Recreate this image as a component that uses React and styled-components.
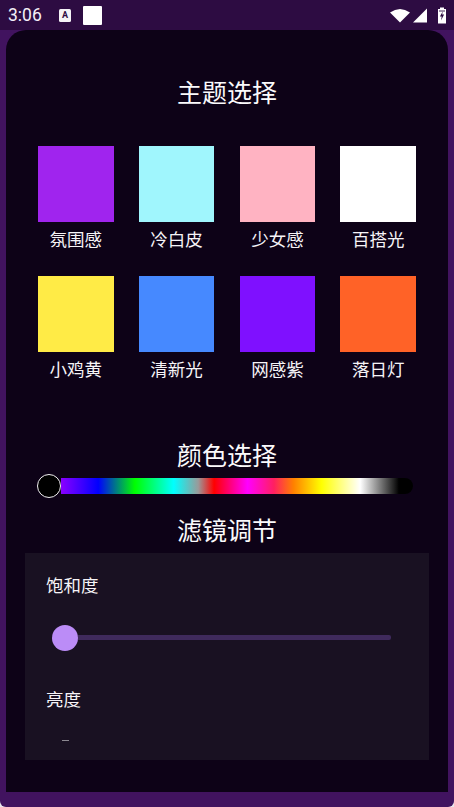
import React from "react";
import styled, { createGlobalStyle } from "styled-components";

const Global = createGlobalStyle`
  html, body { margin: 0; padding: 0; background: #e9e6ec; }
  #root { width: 454px; height: 807px; }
  * { box-sizing: border-box; }
`;

const CJK = `"Noto Sans CJK SC", "Noto Sans", sans-serif`;

const Screen = styled.div`
  width: 454px;
  height: 807px;
  display: flex;
  flex-direction: column;
  background: #41135f;
  border-radius: 0 0 6px 6px;
  overflow: hidden;
  font-family: ${CJK};
  color: #fff;
`;

const StatusBar = styled.div`
  height: 30px;
  flex: none;
  display: flex;
  align-items: center;
  padding: 0 8px 0 8px;
  background: #2d0c42;
`;

const Time = styled.span`
  font-family: Roboto, sans-serif;
  font-size: 17.5px;
  color: #f4eff7;
  width: 51px;
`;

const NoticeA = styled.span`
  width: 12px;
  height: 13px;
  background: #f5f3f6;
  border-radius: 1.5px;
  display: flex;
  justify-content: center;
  font-family: Roboto, sans-serif;
  font-weight: 700;
  font-size: 9px;
  line-height: 12px;
  color: #2d0c42;
  margin-right: 12px;
`;

const NoticeSquare = styled.span`
  width: 19px;
  height: 19px;
  background: #fff;
  border-radius: 1px;
`;

const StatusRight = styled.div`
  margin-left: auto;
  display: flex;
  align-items: center;
`;

const Panel = styled.main`
  height: 762px;
  flex: none;
  margin: 0 6px;
  display: flex;
  flex-direction: column;
  align-items: center;
  background: #0d0217;
  border-radius: 20px 20px 0 0;
  padding-top: 43px;
  overflow: hidden;
`;

const Title = styled.h2`
  margin: 0;
  font-size: 25px;
  font-weight: 400;
  line-height: 36px;
  text-align: center;
  color: #fbfafc;
`;

const Grid = styled.div`
  margin-top: 37px;
  display: grid;
  grid-template-columns: repeat(4, 75.5px);
  column-gap: 25.3px;
  row-gap: 21px;
`;

const Theme = styled.div`
  display: flex;
  flex-direction: column;
  align-items: center;
`;

const Swatch = styled.div`
  width: 100%;
  height: 76px;
  background: ${(p) => p.$color};
`;

const ThemeName = styled.span`
  padding-top: 1px;
  font-size: 17.5px;
  line-height: 32px;
  color: #f6f4f7;
`;

const ColorTitle = styled(Title)`
  margin-top: 51px;
`;

const HueSlider = styled.div`
  position: relative;
  width: 352px;
  height: 15.5px;
  margin: 6px 0 0 19px;
  flex: none;
  border-radius: 0 8px 8px 0;
  background: linear-gradient(
    to right,
    #8a00ff 0%,
    #0000ff 10.6%,
    #00ff00 21%,
    #00ffff 32%,
    #9a9a9a 39%,
    #ff0000 43.5%,
    #ff00ff 53%,
    #ff2060 60.5%,
    #ff8000 66%,
    #ffff00 74%,
    #ffffff 85%,
    #000000 96%,
    #000000 100%
  );
`;

const HueThumb = styled.span`
  position: absolute;
  left: -24px;
  top: -4.5px;
  width: 24px;
  height: 24px;
  border-radius: 50%;
  background: #000;
  border: 1.75px solid #f2f0f3;
`;

const FilterTitle = styled(Title)`
  margin-top: 17px;
`;

const FilterCard = styled.section`
  width: 404px;
  height: 207px;
  flex: none;
  margin-top: 6px;
  padding: 18px 20px 0 21px;
  background: #191122;
  overflow: hidden;
`;

const FilterLabel = styled.div`
  font-size: 17.5px;
  line-height: 28px;
  color: #f6f4f7;
`;

const FilterSlider = styled.div`
  display: flex;
  align-items: center;
  height: 26px;
  margin: 26px 0 34px 6px;
`;

const Thumb = styled.span`
  width: 26px;
  height: 26px;
  flex: none;
  border-radius: 50%;
  background: #bb8cf7;
`;

const Track = styled.span`
  width: 313px;
  height: 5px;
  background: #3f2a5c;
  border-radius: 0 2px 2px 0;
`;

const ClippedTick = styled.span`
  display: block;
  width: 7px;
  height: 1px;
  margin: 27px 0 0 16px;
  background: #8c8891;
`;

const Wifi = styled((props) => (
  <svg width="20" height="15" viewBox="0 0 20 15" {...props}>
    <path d="M0 4.6 Q10 -2.4 20 4.6 L10 14.6 Z" fill="#fff" />
  </svg>
))`
  margin-right: 3px;
`;

const Signal = styled((props) => (
  <svg width="14" height="15" viewBox="0 0 14 15" {...props}>
    <path d="M0 14.5 L14 0.5 V14.5 Z" fill="#fff" />
  </svg>
))`
  margin-right: 11.5px;
`;

const Battery = () => (
  <svg width="8" height="17" viewBox="0 0 8 17">
    <path d="M2 0.5 H6 V2 H8 V16.5 H0 V2 H2 Z" fill="#fff" />
    <path d="M1 3 H7 V5 H1 Z" fill="#2d0c42" opacity="0.45" />
    <path d="M4.8 4.2 L1.9 9.6 H3.7 L3 13.6 L6.1 7.6 H4.2 Z" fill="#2d0c42" />
  </svg>
);

const themes = [
  ["氛围感", "#a024ee"],
  ["冷白皮", "#a0f6fd"],
  ["少女感", "#ffb3c2"],
  ["百搭光", "#ffffff"],
  ["小鸡黄", "#ffeb46"],
  ["清新光", "#4689ff"],
  ["网感紫", "#7f10ff"],
  ["落日灯", "#ff6227"],
];

export default function App() {
  return (
    <>
      <Global />
      <Screen>
        <StatusBar>
          <Time>3:06</Time>
          <NoticeA>A</NoticeA>
          <NoticeSquare />
          <StatusRight>
            <Wifi />
            <Signal />
            <Battery />
          </StatusRight>
        </StatusBar>
        <Panel>
          <Title>主题选择</Title>
          <Grid>
            {themes.map(([name, color]) => (
              <Theme key={name}>
                <Swatch $color={color} />
                <ThemeName>{name}</ThemeName>
              </Theme>
            ))}
          </Grid>
          <ColorTitle>颜色选择</ColorTitle>
          <HueSlider>
            <HueThumb />
          </HueSlider>
          <FilterTitle>滤镜调节</FilterTitle>
          <FilterCard>
            <FilterLabel>饱和度</FilterLabel>
            <FilterSlider>
              <Thumb />
              <Track />
            </FilterSlider>
            <FilterLabel>亮度</FilterLabel>
            <ClippedTick />
          </FilterCard>
        </Panel>
      </Screen>
    </>
  );
}
